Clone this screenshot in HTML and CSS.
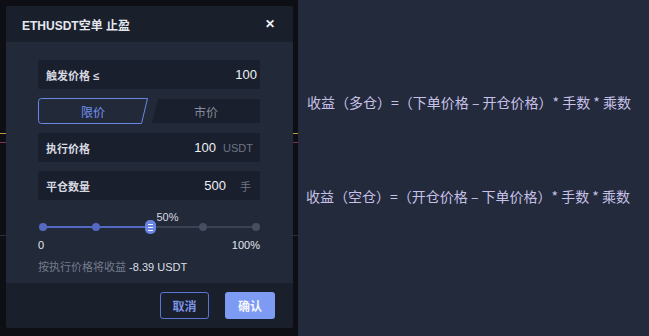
FILE: index.html
```html
<!DOCTYPE html>
<html lang="zh-CN">
<head>
<meta charset="UTF-8">
<meta name="viewport" content="width=device-width, initial-scale=1.0">
<title>止盈</title>
<link rel="stylesheet" href="styles.css">
</head>
<body>
<div class="backdrop">
    <div class="dialog">
        <div class="dialog-header">
            <span class="dialog-title">ETHUSDT空单 止盈</span>
            <span class="dialog-close">&#x2715;</span>
        </div>
        <div class="dialog-body">
            <div class="field">
                <span class="field-label">触发价格 ≤</span>
                <span class="field-value value-only">100</span>
            </div>
            <div class="tabs">
                <div class="tab active">
                    <svg class="tab-shape" viewBox="0 0 110 26" preserveAspectRatio="none">
                        <path d="M3.5 0.5 H109.5 L103.5 25.5 H3.5 Q0.5 25.5 0.5 22.5 V3.5 Q0.5 0.5 3.5 0.5 Z" vector-effect="non-scaling-stroke"/>
                    </svg>
                    <span>限价</span>
                </div>
                <div class="tab">
                    <svg class="tab-shape" viewBox="0 0 108 24" preserveAspectRatio="none">
                        <path d="M6 0 H106 Q108 0 108 2 V22 Q108 24 106 24 H0 Z"/>
                    </svg>
                    <span>市价</span>
                </div>
            </div>
            <div class="field">
                <span class="field-label">执行价格</span>
                <span class="field-value">100</span>
                <span class="field-unit">USDT</span>
            </div>
            <div class="field">
                <span class="field-label">平仓数量</span>
                <span class="field-value">500</span>
                <span class="field-unit unit-hand">手</span>
            </div>
            <div class="slider">
                <div class="slider-track">
                    <div class="slider-fill"></div>
                    <span class="dot on" style="left: 0%"></span>
                    <span class="dot on" style="left: 25%"></span>
                    <span class="dot" style="left: 75%"></span>
                    <span class="dot" style="left: 100%"></span>
                    <span class="thumb" style="left: 50%"><i></i><i></i><i></i></span>
                    <span class="thumb-label" style="left: 50%">50%</span>
                </div>
                <div class="slider-ends">
                    <span>0</span>
                    <span>100%</span>
                </div>
            </div>
            <div class="hint">按执行价格将收益 <b>-8.39 USDT</b></div>
        </div>
        <div class="dialog-footer">
            <button class="btn btn-cancel">取消</button>
            <button class="btn btn-ok">确认</button>
        </div>
    </div>
</div>
<div class="notes">
    <p class="note note-long">收益（多仓）=（下单价格 – 开仓价格）* 手数 * 乘数</p>
    <p class="note note-short">收益（空仓）=（开仓价格 – 下单价格）* 手数 * 乘数</p>
</div>
</body>
</html>
```

FILE: styles.css
```css
* {
    box-sizing: border-box;
}

body {
    margin: 0;
    height: 336px;
    display: flex;
    font-family: "Liberation Sans", "Noto Sans CJK SC", sans-serif;
    background-color: #232a3b;
    overflow: hidden;
}

.backdrop {
    width: 298px;
    padding: 6px 5px 8px 6px;
    background-color: #0d0f14;
    background-image:
        linear-gradient(#b89a3c, #b89a3c),
        linear-gradient(#7a3050, #7a3050),
        linear-gradient(#2a2f3a, #2a2f3a);
    background-size: 100% 1px, 100% 1px, 100% 1px;
    background-position: 0 133px, 0 142px, 0 235px;
    background-repeat: no-repeat;
}

.dialog {
    width: 287px;
    height: 322px;
    border-radius: 3px;
    overflow: hidden;
    display: flex;
    flex-direction: column;
    background-color: #222939;
}

.dialog-header {
    height: 36px;
    display: flex;
    align-items: center;
    justify-content: space-between;
    padding: 0 18px 0 16px;
    background-color: #1a1f2c;
}

.dialog-title {
    color: #e4e7ee;
    font-size: 12px;
    font-weight: bold;
}

.dialog-close {
    color: #f2f3f6;
    font-size: 12px;
    font-weight: bold;
}

.dialog-body {
    flex: 1;
    padding: 18px 33px 0 32px;
    display: flex;
    flex-direction: column;
    gap: 9px;
}

.field {
    height: 29px;
    display: flex;
    align-items: center;
    padding: 0 7px 0 8px;
    border-radius: 2px;
    background-color: #1a1f2d;
}

.field-label {
    flex: 1;
    color: #d6d9e0;
    font-size: 11px;
    font-weight: bold;
}

.field-value {
    color: #eef0f4;
    font-size: 13px;
}

.value-only {
    margin-right: -4px;
}

.field-unit {
    margin-left: 7px;
    color: #6d7484;
    font-size: 11px;
}

.unit-hand {
    margin-left: 14px;
    margin-right: 2px;
}

.tabs {
    height: 26px;
    display: grid;
    grid-template-columns: 110px 1fr;
    gap: 4px;
}

.tab {
    position: relative;
    display: flex;
    align-items: center;
    justify-content: center;
    color: #858b9b;
    font-size: 12px;
}

.tab span {
    position: relative;
}

.tab-shape {
    position: absolute;
    left: 0;
    top: 1px;
    width: 100%;
    height: 24px;
    fill: #1a1f2d;
}

.tab.active {
    color: #7592f0;
}

.tab.active .tab-shape {
    top: 0;
    height: 26px;
    fill: none;
    stroke: #6a87e4;
    stroke-width: 1;
}

.slider {
    margin-top: 17px;
    padding: 0 1px 0 4px;
}

.slider-track {
    position: relative;
    height: 2px;
    margin: 0 3px 0 1px;
    background-color: #3b4253;
}

.slider-fill {
    width: 50%;
    height: 100%;
    background-color: #5368c0;
}

.dot {
    position: absolute;
    top: -3px;
    width: 8px;
    height: 8px;
    margin-left: -4px;
    border-radius: 50%;
    background-color: #474e5f;
}

.dot.on {
    background-color: #5669c2;
}

.thumb {
    position: absolute;
    top: -6px;
    width: 11px;
    height: 14px;
    margin-left: -5px;
    border-radius: 5px;
    background-color: #6a84e2;
    display: flex;
    flex-direction: column;
    align-items: center;
    justify-content: center;
    gap: 2px;
}

.thumb i {
    width: 5px;
    height: 1px;
    background-color: #eef1ff;
}

.thumb-label {
    position: absolute;
    top: -15px;
    margin-left: 7px;
    color: #d8dbe2;
    font-size: 11px;
}

.slider-ends {
    display: flex;
    justify-content: space-between;
    margin: 11px -1px 0 -4px;
    color: #e4e6ec;
    font-size: 11px;
}

.hint {
    margin-top: -2px;
    color: #747b8b;
    font-size: 11px;
}

.hint b {
    color: #dcdfe6;
    font-weight: normal;
}

.dialog-footer {
    height: 45px;
    display: flex;
    align-items: center;
    justify-content: flex-end;
    gap: 16px;
    padding: 0 18px 0 0;
    background-color: #1a1f2c;
}

.btn {
    width: 49px;
    height: 27px;
    border-radius: 3px;
    font-family: inherit;
    font-size: 12px;
    font-weight: bold;
    cursor: pointer;
}

.btn-cancel {
    border: 1px solid #5a76d2;
    background-color: transparent;
    color: #7a93e6;
}

.btn-ok {
    width: 50px;
    border: none;
    background-color: #7e9bf3;
    color: #f4f6ff;
}

.notes {
    flex: 1;
    padding: 0 0 0 8px;
    display: flex;
    flex-direction: column;
}

.note {
    margin: 0;
    color: #c7c1e8;
    font-family: "Noto Sans CJK SC", sans-serif;
    font-size: 14px;
    white-space: nowrap;
}

.note-long {
    margin-top: 92px;
    margin-left: 1px;
}

.note-short {
    margin-top: 74px;
}
```
